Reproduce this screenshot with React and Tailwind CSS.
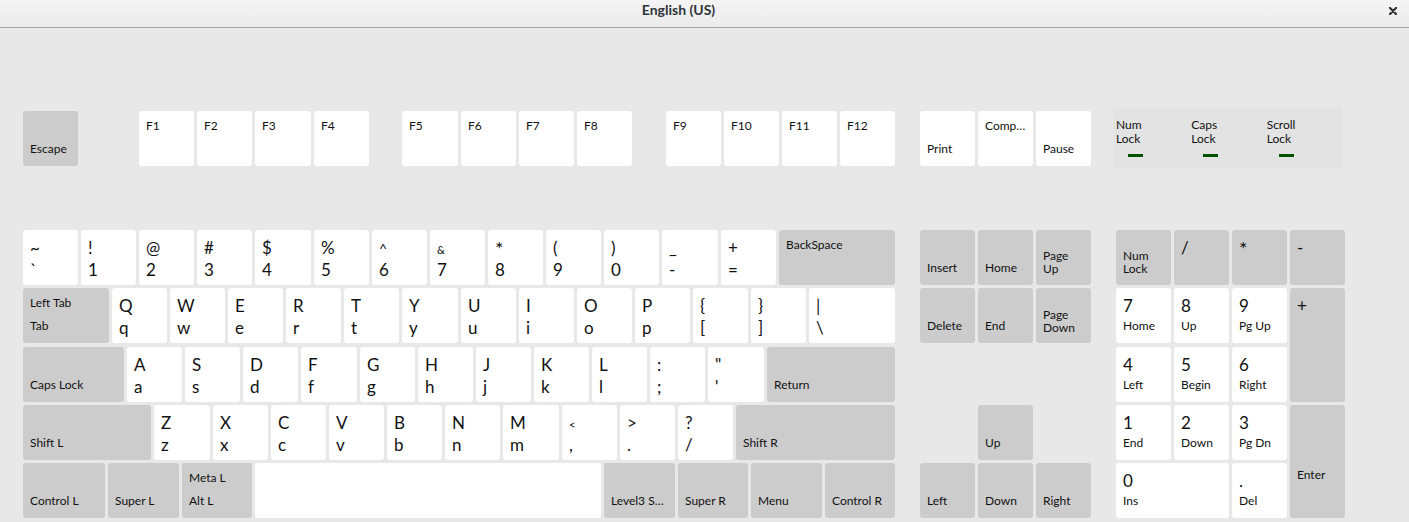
import React from 'react';

// upper slot / lower slot label styles
const TOP = {
    big: 'pt-[7px] text-[17px] leading-[22px]',
    small: 'pt-[6px] text-[12px] leading-[18px]',
};
const BOTTOM = {
    big: 'text-[17px] leading-[22px]',
    small: 'text-[12px] leading-[18px]',
    multi: '-mt-[10px] text-[12px] leading-[13px]',
};

const sym = (t, b, w = 'w-[55px]') => ({ t, b, ts: 'big', bs: 'big', w });
const letter = (c, w) => sym(c, c.toLowerCase(), w);
const mod = (b, w, extra = {}) => ({ b, bs: 'small', g: true, w, ...extra });

const rows = [
    [
        sym('~', '`'), sym('!', '1'), sym('@', '2'), sym('#', '3'), sym('$', '4', 'w-[56px]'),
        sym('%', '5'), { ...sym('^', '6'), tc: 'text-[14px]' }, { ...sym('&', '7'), tc: 'text-[11px]' },
        { ...sym('*', '8'), tc: 'text-[20px]' }, sym('(', '9'),
        sym(')', '0'), sym('_', '-', 'w-[56px]'), sym('+', '='),
        { t: 'BackSpace', ts: 'small', g: true, w: 'w-[116px]' },
    ],
    [
        { t: 'Left Tab', ts: 'small', b: 'Tab', bs: 'small', g: true, w: 'w-[86px]' },
        letter('Q'), letter('W'), letter('E'), letter('R'), letter('T'), letter('Y', 'w-[56px]'),
        letter('U'), letter('I'), letter('O'), letter('P'), sym('{', '['), sym('}', ']'),
        sym('|', '\\', 'w-[86px]'),
    ],
    [
        mod('Caps Lock', 'w-[101px]'),
        letter('A'), letter('S'), letter('D'), letter('F', 'w-[56px]'), letter('G'), letter('H'),
        letter('J'), letter('K'), letter('L'), sym(':', ';'), sym('"', "'", 'w-[56px]'),
        mod('Return', 'w-[128px]'),
    ],
    [
        mod('Shift L', 'w-[128px]'),
        letter('Z', 'w-[56px]'), letter('X'), letter('C'), letter('V'), letter('B'), letter('N'),
        letter('M', 'w-[56px]'), { ...sym('<', ','), tc: 'text-[11px]' }, sym('>', '.'), sym('?', '/'),
        mod('Shift R', 'w-[159px]'),
    ],
    [
        mod('Control L', 'w-[82px]'), mod('Super L', 'w-[71px]'),
        { t: 'Meta L', ts: 'small', b: 'Alt L', bs: 'small', g: true, w: 'w-[70px]' },
        { w: 'w-[346px]' },
        mod('Level3 S…', 'w-[71px]'), mod('Super R', 'w-[70px]'), mod('Menu', 'w-[71px]'),
        mod('Control R', 'w-[70px]'),
    ],
];

function Key({ k, className = '' }) {
    const size = k.w ? `${k.w} h-[55px] shrink-0` : '';
    return (
        <div className={`${k.g ? 'bg-[#cccccc]' : 'bg-white'} rounded-[3px] px-[7px] flex flex-col overflow-hidden whitespace-nowrap ${size} ${className}`}>
            <div className={`h-[29px] shrink-0 ${k.t ? TOP[k.ts] : ''}`}>
                {k.t && <span className={k.tc || ''}>{k.t}</span>}
            </div>
            {k.b && (
                <div className={`${BOTTOM[k.bs]} ${k.bc || ''}`}>
                    {Array.isArray(k.b) ? k.b.map((l) => <div key={l}>{l}</div>) : k.b}
                </div>
            )}
        </div>
    );
}

const fkey = (t, w = 'w-[55px]') => ({ t, ts: 'small', w });

export default function App() {
    return (
        <div className="w-[1409px] h-[522px] bg-[#e8e8e8] text-[#111] overflow-hidden" style={{ fontFamily: 'Lato, "Noto Sans", sans-serif' }}>
            {/* header bar */}
            <div className="h-[28px] flex border-b border-[#a4a4a4] bg-gradient-to-b from-[#f4f4f4] to-[#ebebeb]">
                <div className="flex-1 flex justify-center pt-[1px]">
                    <span className="text-[14px] leading-[17px] font-bold text-[#2e3436]">English (US)</span>
                </div>
                <div className="w-[52px] pl-[32px] pt-[7px]">
                    <svg width="8" height="8" viewBox="0 0 8 8">
                        <path d="M0.8 0.8 L7.2 7.2 M7.2 0.8 L0.8 7.2" stroke="#2e3436" strokeWidth="2.2" strokeLinecap="round" />
                    </svg>
                </div>
            </div>

            {/* function row */}
            <div className="flex items-start pl-[23px] mt-[83px]">
                <Key k={mod('Escape', 'w-[55px]')} />
                <div className="flex gap-[3px] ml-[61px]">
                    {[fkey('F1'), fkey('F2'), fkey('F3', 'w-[56px]'), fkey('F4')].map((k) => <Key key={k.t} k={k} />)}
                </div>
                <div className="flex gap-[3px] ml-[33px]">
                    {[fkey('F5', 'w-[56px]'), fkey('F6'), fkey('F7'), fkey('F8')].map((k) => <Key key={k.t} k={k} />)}
                </div>
                <div className="flex gap-[3px] ml-[34px]">
                    {[fkey('F9'), fkey('F10'), fkey('F11'), fkey('F12')].map((k) => <Key key={k.t} k={k} />)}
                </div>
                <div className="flex gap-[3px] ml-[25px]">
                    <Key k={{ b: 'Print', bs: 'small', w: 'w-[55px]' }} />
                    <Key k={fkey('Comp…')} />
                    <Key k={{ b: 'Pause', bs: 'small', w: 'w-[55px]' }} />
                </div>
                <div className="ml-[22px] -mt-[3px] h-[60px] w-[229px] bg-[#e3e3e3] pl-[3px] pt-[10px] flex">
                    {[['Num', 'Lock'], ['Caps', 'Lock'], ['Scroll', 'Lock']].map(([a, b]) => (
                        <div key={a} className="w-[76.5px] text-[12px] leading-[14px]">
                            <div>{a}</div>
                            <div>{b}</div>
                            <div className="ml-[12px] mt-[8px] w-[15px] h-[3px] bg-[#005200]" />
                        </div>
                    ))}
                </div>
            </div>

            {/* main block, navigation, keypad */}
            <div className="flex items-start pl-[23px] mt-[62px] gap-[25px]">
                <div className="flex flex-col gap-y-[3.25px]">
                    {rows.map((row, i) => (
                        <div key={i} className="flex gap-[3px]">
                            {row.map((k, j) => <Key key={j} k={k} />)}
                        </div>
                    ))}
                </div>

                <div className="grid grid-cols-[repeat(3,55px)] grid-rows-[repeat(5,55px)] gap-x-[3px] gap-y-[3.25px]">
                    <Key k={mod('Insert')} />
                    <Key k={mod('Home')} />
                    <Key k={{ b: ['Page', 'Up'], bs: 'multi', g: true }} />
                    <Key k={mod('Delete')} />
                    <Key k={mod('End')} />
                    <Key k={{ b: ['Page', 'Down'], bs: 'multi', g: true, bc: 'mt-[-9px]' }} />
                    <Key k={mod('Up')} className="col-start-2 row-start-4" />
                    <Key k={mod('Left')} className="col-start-1 row-start-5" />
                    <Key k={mod('Down')} className="col-start-2 row-start-5" />
                    <Key k={mod('Right')} className="col-start-3 row-start-5" />
                </div>

                <div className="grid grid-cols-[repeat(4,55px)] grid-rows-[repeat(5,55px)] gap-x-[3px] gap-y-[3.25px]">
                    <Key k={{ b: ['Num', 'Lock'], bs: 'multi', g: true }} />
                    <Key k={{ t: '/', ts: 'big', g: true }} />
                    <Key k={{ t: '*', ts: 'big', g: true, tc: 'text-[20px]' }} />
                    <Key k={{ t: '-', ts: 'big', g: true }} />
                    <Key k={{ t: '7', ts: 'big', b: 'Home', bs: 'small' }} />
                    <Key k={{ t: '8', ts: 'big', b: 'Up', bs: 'small' }} />
                    <Key k={{ t: '9', ts: 'big', b: 'Pg Up', bs: 'small' }} />
                    <Key k={{ t: '+', ts: 'big', g: true }} className="row-span-2" />
                    <Key k={{ t: '4', ts: 'big', b: 'Left', bs: 'small' }} />
                    <Key k={{ t: '5', ts: 'big', b: 'Begin', bs: 'small' }} />
                    <Key k={{ t: '6', ts: 'big', b: 'Right', bs: 'small' }} />
                    <Key k={{ t: '1', ts: 'big', b: 'End', bs: 'small' }} />
                    <Key k={{ t: '2', ts: 'big', b: 'Down', bs: 'small' }} />
                    <Key k={{ t: '3', ts: 'big', b: 'Pg Dn', bs: 'small' }} />
                    <Key k={{ b: 'Enter', bs: 'small', g: true, bc: 'pt-[32px]' }} className="row-span-2" />
                    <Key k={{ t: '0', ts: 'big', b: 'Ins', bs: 'small' }} className="col-span-2" />
                    <Key k={{ t: '.', ts: 'big', b: 'Del', bs: 'small' }} />
                </div>
            </div>
        </div>
    );
}
